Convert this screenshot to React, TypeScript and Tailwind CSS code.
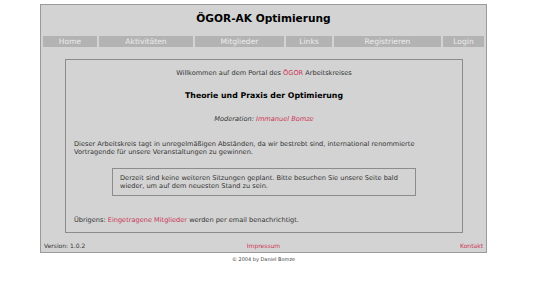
import React from "react";

const nav = [
  { label: "Home", w: "w-[54px]" },
  { label: "Aktivitäten", w: "w-[94px]" },
  { label: "Mitglieder", w: "w-[89px]" },
  { label: "Links", w: "w-[46px]" },
  { label: "Registrieren", w: "w-[107px]" },
  { label: "Login", w: "flex-1" },
];

export default function App() {
  return (
    <div className="w-[560px] h-[297px] bg-white text-[#333] font-['DejaVu_Sans',sans-serif]">
      <div className="pt-[4px] pl-[40px]">
        <div className="w-[447px] h-[249px] bg-[#d3d3d3] border border-[#9a9a9a] flex flex-col px-[2px]">
          <div className="h-[31px] flex items-center justify-center text-[10.6px] font-bold text-black pb-[3px]">
            ÖGOR-AK Optimierung
          </div>
          <div className="flex gap-[2px] h-[11px]">
            {nav.map((n) => (
              <div
                key={n.label}
                className={`${n.w} bg-[#b3b3b3] text-[#ececec] text-[7.6px] leading-[11px] text-center`}
              >
                {n.label}
              </div>
            ))}
          </div>
          <div className="mt-[12px] ml-[22px] w-[398px] h-[174px] border border-[#8c8c8c] flex flex-col text-[6.6px] leading-[8px]">
            <div className="mt-[9px] text-center">
              Willkommen auf dem Portal des <span className="text-[#cc3355]">ÖGOR</span> Arbeitskreises
            </div>
            <div className="mt-[15px] text-center font-bold text-[7.8px] text-black">
              Theorie und Praxis der Optimierung
            </div>
            <div className="mt-[15px] text-center italic">
              Moderation: <span className="text-[#cc3355]">Immanuel Bomze</span>
            </div>
            <div className="mt-[17px] pl-[8px]">
              Dieser Arbeitskreis tagt in unregelmäßigen Abständen, da wir bestrebt sind, international renommierte
              <br />
              Vortragende für unsere Veranstaltungen zu gewinnen.
            </div>
            <div className="mt-[12px] ml-[46px] w-[304px] h-[28px] border border-[#8c8c8c] pl-[7px] pt-[5px]">
              Derzeit sind keine weiteren Sitzungen geplant. Bitte besuchen Sie unsere Seite bald
              <br />
              wieder, um auf dem neuesten Stand zu sein.
            </div>
            <div className="mt-[20px] pl-[8px]">
              Übrigens: <span className="text-[#cc3355]">Eingetragene Mitglieder</span> werden per email benachrichtigt.
            </div>
          </div>
          <div className="mt-auto mb-[2px] flex justify-between text-[6px] leading-[8px] px-[1px]">
            <span className="w-[80px]">Version: 1.0.2</span>
            <span className="text-[#cc3355]">Impressum</span>
            <span className="w-[80px] text-right text-[#cc3355]">Kontakt</span>
          </div>
        </div>
        <div className="w-[447px] text-center text-[5px] mt-[3px] text-[#444]">© 2004 by Daniel Bomze</div>
      </div>
    </div>
  );
}
